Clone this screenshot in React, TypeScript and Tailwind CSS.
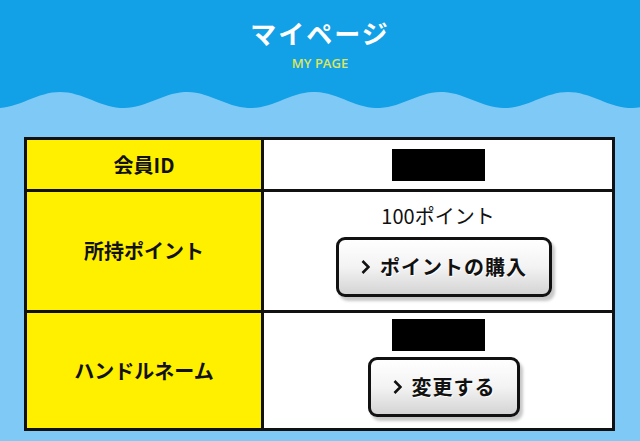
import React from 'react';

const font = { fontFamily: '"Noto Sans CJK JP", "Noto Sans", sans-serif' };

function Wave() {
  // sine wave boundary between the header blue and the page blue
  const pts: string[] = [];
  for (let x = 0; x <= 640; x += 4) {
    const y = 8 - 8 * Math.cos((2 * Math.PI * (x - 60)) / 127);
    pts.push(`L${x} ${y.toFixed(2)}`);
  }
  const d = `M0 0 ${pts.join(' ')} L640 0 Z`;
  return (
    <svg width="640" height="17" viewBox="0 0 640 17" className="block">
      <path d={d} fill="#12a0e6" />
    </svg>
  );
}

function GrayButton({ label, width }: { label: string; width: string }) {
  return (
    <button
      className={`${width} ml-3 h-[60px] flex items-center justify-center gap-[10px] rounded-[9px] border-[3px] border-[#111] bg-gradient-to-b from-white via-[#f3f3f3] to-[#d4d4d4] shadow-[3px_4px_3px_rgba(0,0,0,0.22)] text-[#111] font-bold text-[20px] leading-none [text-shadow:1px_1px_0_rgba(255,255,255,0.9)]`}
    >
      <svg width="9" height="16" viewBox="0 0 9 16" className="shrink-0">
        <path d="M1.5 2 L7.5 8 L1.5 14" fill="none" stroke="#111" strokeWidth="2.6" strokeLinejoin="miter" />
      </svg>
      <span className="tracking-[1px]">{label}</span>
    </button>
  );
}

function Masked() {
  return <div className="w-[93px] h-[32px] bg-black" />;
}

export default function App() {
  return (
    <div className="w-[640px] h-[441px] overflow-hidden bg-[#7ec9f5]" style={font}>
      <header className="bg-[#12a0e6] h-[92px] flex flex-col items-center pt-[18px]">
        <h1 className="text-white font-bold text-[26px] leading-[30px] tracking-[2px]">マイページ</h1>
        <p className="mt-2 text-[#dce660] font-semibold text-[13px] leading-[14px]" style={{ fontFamily: '"Open Sans", "Noto Sans", sans-serif' }}>
          MY PAGE
        </p>
      </header>
      <Wave />

      <div className="ml-6 mt-[28px] w-[591px] border-[3px] border-[#111]">
        <div className="flex h-[49px]">
          <div className="w-[234px] bg-[#fff000] flex items-center justify-center font-bold text-[20px] text-[#111]">会員ID</div>
          <div className="flex-1 bg-white border-l-[3px] border-[#111] flex items-center justify-center">
            <Masked />
          </div>
        </div>

        <div className="flex h-[121px] border-t-[3px] border-[#111]">
          <div className="w-[234px] bg-[#fff000] flex items-center justify-center font-bold text-[20px] text-[#111]">所持ポイント</div>
          <div className="flex-1 bg-white border-l-[3px] border-[#111] flex flex-col items-center justify-center gap-[9px] pb-[2px]">
            <p className="text-[20px] leading-[25px] text-[#111]">100ポイント</p>
            <GrayButton label="ポイントの購入" width="w-[216px]" />
          </div>
        </div>

        <div className="flex h-[118px] border-t-[3px] border-[#111]">
          <div className="w-[234px] bg-[#fff000] flex items-center justify-center font-bold text-[20px] text-[#111]">ハンドルネーム</div>
          <div className="flex-1 bg-white border-l-[3px] border-[#111] flex flex-col items-center justify-center gap-[6px] pb-[6px]">
            <Masked />
            <GrayButton label="変更する" width="w-[152px]" />
          </div>
        </div>
      </div>
    </div>
  );
}
